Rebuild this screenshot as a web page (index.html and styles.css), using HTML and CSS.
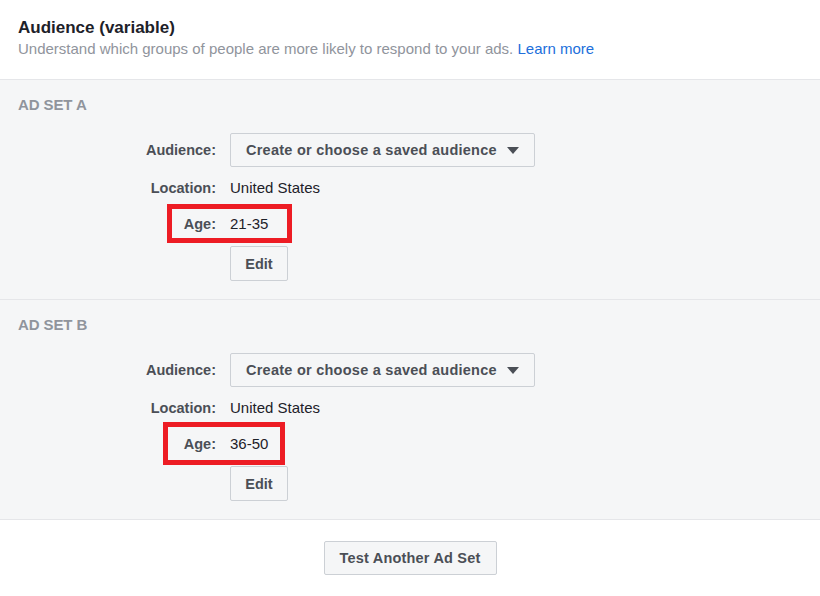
FILE: index.html
```html
<!DOCTYPE html>
<html lang="en">
<head>
<meta charset="utf-8">
<title>Audience (variable)</title>
<link rel="stylesheet" href="styles.css">
</head>
<body>
<div class="panel">
  <header class="head">
    <h1 class="title">Audience (variable)</h1>
    <p class="subtitle">Understand which groups of people are more likely to respond to your ads. <a class="link" href="#">Learn more</a></p>
  </header>

  <section class="adset">
    <h2 class="adset-name">AD SET A</h2>
    <div class="fields">
      <div class="row row-audience">
        <span class="label">Audience:</span>
        <button class="btn btn-select" type="button"><span class="select-text">Create or choose a saved audience</span><svg class="caret" width="12" height="7" viewBox="0 0 12 7"><path d="M0 0h12L6 7z" fill="#4b4f56"/></svg></button>
      </div>
      <div class="row row-location">
        <span class="label">Location:</span>
        <span class="value">United States</span>
      </div>
      <div class="row row-age">
        <span class="label">Age:</span>
        <span class="value">21-35</span>
        <span class="mark mark-a"></span>
      </div>
      <div class="row row-edit">
        <span class="label"></span>
        <button class="btn btn-edit" type="button">Edit</button>
      </div>
    </div>
  </section>

  <section class="adset">
    <h2 class="adset-name">AD SET B</h2>
    <div class="fields">
      <div class="row row-audience">
        <span class="label">Audience:</span>
        <button class="btn btn-select" type="button"><span class="select-text">Create or choose a saved audience</span><svg class="caret" width="12" height="7" viewBox="0 0 12 7"><path d="M0 0h12L6 7z" fill="#4b4f56"/></svg></button>
      </div>
      <div class="row row-location">
        <span class="label">Location:</span>
        <span class="value">United States</span>
      </div>
      <div class="row row-age">
        <span class="label">Age:</span>
        <span class="value">36-50</span>
        <span class="mark mark-b"></span>
      </div>
      <div class="row row-edit">
        <span class="label"></span>
        <button class="btn btn-edit" type="button">Edit</button>
      </div>
    </div>
  </section>

  <footer class="foot">
    <button class="btn btn-test" type="button">Test Another Ad Set</button>
  </footer>
</div>
</body>
</html>
```

FILE: styles.css
```css
* { box-sizing: border-box; }
html, body {
  margin: 0;
  padding: 0;
  background: #ffffff;
}
body {
  font-family: "Liberation Sans", Arial, Helvetica, sans-serif;
  color: #1d2129;
  width: 820px;
  height: 596px;
  overflow: hidden;
}
.panel {
  display: flex;
  flex-direction: column;
}
.head {
  padding: 17px 18px 21px;
  border-bottom: 1px solid #e5e6e9;
  background: #fff;
}
.title {
  margin: 0;
  font-size: 17px;
  line-height: 21px;
  font-weight: bold;
  color: #1d2129;
}
.subtitle {
  margin: 2px 0 0;
  font-size: 15px;
  line-height: 18px;
  color: #90949c;
}
.link {
  color: #216fdb;
  text-decoration: none;
}
.adset {
  background: #f5f6f7;
  border-bottom: 1px solid #e5e6e9;
  padding: 17px 18px 18px;
  height: 220px;
}
.adset-name {
  margin: 0;
  font-size: 15px;
  line-height: 16px;
  font-weight: bold;
  color: #90949c;
  letter-spacing: -0.1px;
}
.fields {
  display: flex;
  flex-direction: column;
  margin-top: 20px;
}
.row {
  position: relative;
  display: grid;
  grid-template-columns: 198px auto;
  column-gap: 14px;
  align-items: center;
  justify-content: start;
}
.row-location { margin-top: 11px; height: 20px; }
.row-age { margin-top: 16px; height: 20px; }
.row-edit { margin-top: 12px; }
.label {
  text-align: right;
  font-size: 14.5px;
  font-weight: bold;
  color: #4b4f56;
  line-height: 20px;
}
.value {
  font-size: 15px;
  line-height: 20px;
  color: #1d2129;
}
.btn {
  font-family: "Liberation Sans", Arial, Helvetica, sans-serif;
  font-size: 14.5px;
  font-weight: bold;
  color: #4b4f56;
  background: #f5f6f7;
  border: 1px solid #ccd0d5;
  border-radius: 2px;
  height: 34px;
  margin: 0;
  cursor: pointer;
  white-space: nowrap;
}
.btn-select {
  display: flex;
  align-items: center;
  justify-content: flex-start;
  gap: 10px;
  width: 305px;
  padding: 0 0 0 15px;
  letter-spacing: 0.25px;
}
.select-text { white-space: nowrap; flex: none; }
.caret { display: block; flex: none; }
.btn-edit {
  width: 58px;
  height: 35px;
  padding: 0;
}
.mark {
  position: absolute;
  border: 5px solid #ed1c24;
  pointer-events: none;
}
.mark-a {
  left: 149px;
  top: -10px;
  width: 125px;
  height: 39px;
}
.mark-b {
  left: 145px;
  top: -12px;
  width: 122px;
  height: 43px;
}
.foot {
  display: flex;
  justify-content: center;
  padding-top: 21px;
  background: #fff;
}
.btn-test {
  width: 173px;
  height: 34px;
  padding: 0;
  letter-spacing: 0.2px;
}
```
